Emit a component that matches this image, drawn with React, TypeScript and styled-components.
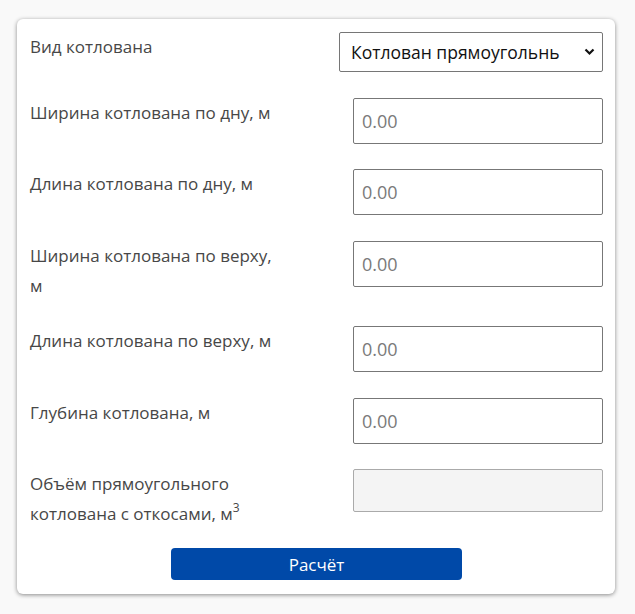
import React from "react";
import styled, { createGlobalStyle } from "styled-components";

const Global = createGlobalStyle`
  html, body { margin: 0; padding: 0; background: #f9f9f9; }
  body { font-family: "Open Sans", "Liberation Sans", sans-serif; }
  * { box-sizing: border-box; }
`;

const Page = styled.div`
  padding: 19px 20px 20px 17px;
`;

const Card = styled.form`
  width: 598px;
  background: #fff;
  border-radius: 6px;
  box-shadow: 0 1px 4px rgba(0, 0, 0, 0.45);
  padding: 13px 12px 14px 13px;
  display: flex;
  flex-direction: column;
`;

const Grid = styled.div`
  display: grid;
  grid-template-columns: 1fr auto;
  row-gap: 25.5px;
  align-items: start;
`;

const Label = styled.label`
  font-size: 17px;
  line-height: 30px;
  color: #474747;
  max-width: 250px;
  sup {
    font-size: 12px;
    line-height: 0;
    vertical-align: 8px;
  }
`;

const Select = styled.div`
  position: relative;
  justify-self: end;
  width: 264px;
  height: 40px;
  border: 1px solid #767676;
  border-radius: 2px;
  display: flex;
  align-items: center;
  padding: 0 28px 0 11px;
  font-size: 17.5px;
  color: #111;
  white-space: nowrap;
  overflow: hidden;
  svg {
    position: absolute;
    right: 7px;
    top: 15px;
  }
`;

const Input = styled.input<{ $readOnly?: boolean }>`
  justify-self: end;
  width: 250px;
  height: ${(p) => (p.$readOnly ? "43px" : "46px")};
  border: 1px solid ${(p) => (p.$readOnly ? "#aaa" : "#777")};
  border-radius: 2px;
  background: ${(p) => (p.$readOnly ? "#f4f4f4" : "#fff")};
  padding: 0 8px;
  font-family: inherit;
  font-size: 18px;
  color: #333;
  outline: none;
  &::placeholder { color: #7a7a7a; }
`;

const Button = styled.button`
  align-self: center;
  margin-top: 19px;
  width: 291px;
  height: 32px;
  border: none;
  border-radius: 4px;
  background: #0049a8;
  color: #fff;
  font-family: inherit;
  font-size: 17px;
  cursor: pointer;
`;

const rows = [
  "Ширина котлована по дну, м",
  "Длина котлована по дну, м",
  "Ширина котлована по верху, м",
  "Длина котлована по верху, м",
  "Глубина котлована, м",
];

export default function App() {
  return (
    <>
      <Global />
      <Page>
        <Card onSubmit={(e) => e.preventDefault()}>
          <Grid>
            <Label>Вид котлована</Label>
            <Select>
              Котлован прямоугольнь
              <svg width="11" height="8" viewBox="0 0 11 8">
                <path d="M1.5 1.5 L5.5 5.5 L9.5 1.5" fill="none" stroke="#111" strokeWidth="2.2" />
              </svg>
            </Select>
            {rows.map((r) => (
              <React.Fragment key={r}>
                <Label>{r}</Label>
                <Input placeholder="0.00" />
              </React.Fragment>
            ))}
            <Label>
              Объём прямоугольного котлована с откосами, м<sup>3</sup>
            </Label>
            <Input $readOnly readOnly />
          </Grid>
          <Button type="submit">Расчёт</Button>
        </Card>
      </Page>
    </>
  );
}
